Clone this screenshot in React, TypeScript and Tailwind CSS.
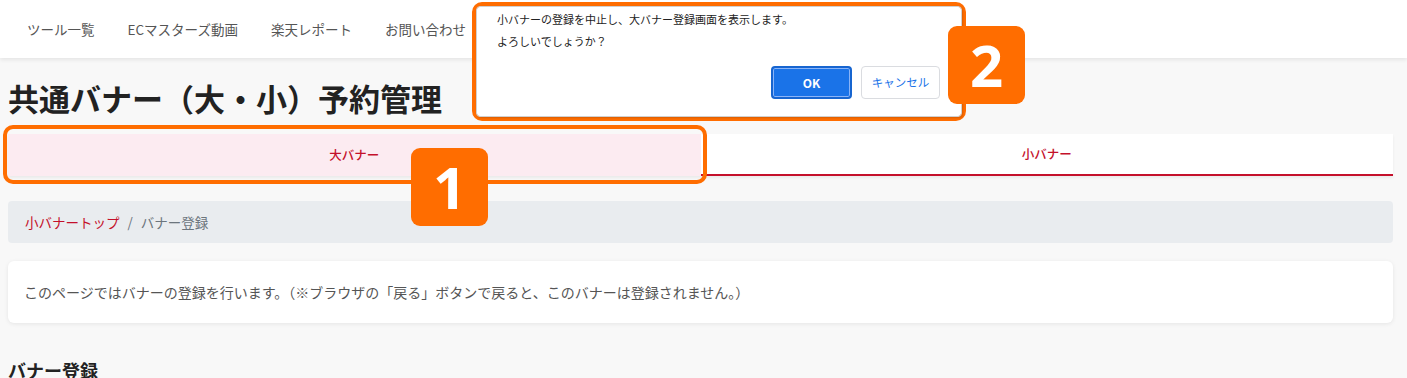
const jp = "font-['Noto_Sans_CJK_JP','Noto_Sans',sans-serif]";

const navItems = ["ツール一覧", "ECマスターズ動画", "楽天レポート", "お問い合わせ"];

function Badge({ n }: { n: string }) {
  return (
    <div className="flex h-[78px] w-[77px] items-center justify-center rounded-[9px] bg-[#ff6d00] font-['Noto_Sans',sans-serif] text-[58px] font-bold leading-none text-white">
      {n}
    </div>
  );
}

export default function App() {
  return (
    <div className={`relative h-[378px] w-[1407px] overflow-hidden bg-[#f8f8f8] ${jp}`}>
      {/* top nav */}
      <header className="flex h-[58px] items-center gap-[33px] bg-white pl-[27px] shadow-[0_2px_4px_rgba(0,0,0,0.08)]">
        {navItems.map((t) => (
          <span key={t} className="text-[13.5px] text-[#555]">
            {t}
          </span>
        ))}
      </header>

      <main className="pl-2 pr-[14px]">
        <h1 className="mt-[21px] text-[31px] font-bold leading-[37px] text-[#222]">
          共通バナー（大・小）予約管理
        </h1>

        {/* tabs */}
        <div className="mt-[18px] grid h-[42px] grid-cols-2 shadow-[0_2px_3px_rgba(0,0,0,0.06)]">
          <div className="flex items-center justify-center bg-[#fcebf1] text-[12.5px] font-medium text-[#c4102b]">
            大バナー
          </div>
          <div className="flex items-center justify-center border-b-2 border-[#c4102b] bg-white text-[12.5px] font-medium text-[#c4102b]">
            小バナー
          </div>
        </div>

        {/* breadcrumb */}
        <nav className="mt-[25px] flex h-[42px] items-center rounded bg-[#e9ecef] pl-[17px] text-[13.5px]">
          <span className="text-[#c4102b]">小バナートップ</span>
          <span className="px-2 text-[#6c757d]">/</span>
          <span className="text-[#6c757d]">バナー登録</span>
        </nav>

        {/* info card */}
        <div className="mt-[18px] flex h-[62px] items-center rounded-md bg-white pl-4 text-[14px] text-[#555] shadow-[0_1px_4px_rgba(0,0,0,0.08)]">
          このページではバナーの登録を行います。（※ブラウザの「戻る」ボタンで戻ると、このバナーは登録されません。）
        </div>

        <h2 className="mt-[34px] text-[18px] font-bold leading-[26px] text-[#222]">バナー登録</h2>
      </main>

      {/* highlight 1 */}
      <div className="absolute left-[3px] top-[125px] h-[59px] w-[704px] rounded-[10px] border-4 border-[#ff6d00]" />
      <div className="absolute left-[411px] top-[148px]">
        <Badge n="1" />
      </div>

      {/* confirm dialog */}
      <div className="absolute left-[472px] top-[2px] h-[119px] w-[494px] rounded-[10px] border-4 border-[#ff6d00] bg-white">
        <div className="flex h-full flex-col rounded-[4px] border border-[#d0d0d0] pl-[20px] pr-[21px] pt-[1px] shadow-[1px_1px_2px_rgba(0,0,0,0.15)]">
          <p className="text-[11px] leading-[22px] text-[#222]">
            小バナーの登録を中止し、大バナー登録画面を表示します。
          </p>
          <p className="text-[11px] leading-[22px] text-[#222]">よろしいでしょうか？</p>
          <div className="mt-[14px] flex justify-end gap-[9px]">
            <button className="flex h-[33px] w-[81px] items-center justify-center rounded-[4px] border-2 border-[#1765d0] bg-[#1a73e8] text-[12px] font-bold text-white shadow-[inset_0_0_0_1px_#8ab4f8]">
              OK
            </button>
            <button className="flex h-[33px] w-[79px] items-center justify-center rounded-[4px] border border-[#dadce0] bg-white text-[11.5px] text-[#1a73e8]">
              キャンセル
            </button>
          </div>
        </div>
      </div>
      <div className="absolute left-[948px] top-[26px]">
        <Badge n="2" />
      </div>
    </div>
  );
}
